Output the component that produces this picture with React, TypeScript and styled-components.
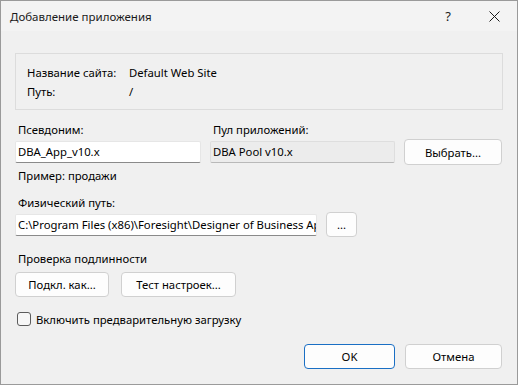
import React from "react"
import styled, { createGlobalStyle } from "styled-components"

const Global = createGlobalStyle`
  html, body { margin: 0; padding: 0; background: #f0f0f0; }
  body {
    font-family: "Segoe UI", "Noto Sans", "Open Sans", sans-serif;
    font-size: 11.3px;
    color: #000;
  }
  * { box-sizing: border-box; }
`

const Window = styled.div`
  width: 518px;
  height: 385px;
  border: 1px solid #9a9a9a;
  background: #f0f0f0;
  display: flex;
  flex-direction: column;
`

const TitleBar = styled.div`
  height: 30px;
  background: #f3f3f3;
  display: flex;
  align-items: center;
  padding-left: 9px;
`

const Title = styled.span`
  flex: 1;
  font-size: 11.5px;
  color: #1a1a1a;
`

const CaptionButton = styled.div`
  width: 46px;
  height: 30px;
  display: flex;
  align-items: center;
  justify-content: center;
  font-size: 13px;
  color: #1a1a1a;
`

const Body = styled.div`
  flex: 1;
  display: flex;
  flex-direction: column;
  padding: 22px 14px 15px 14px;
`

const GroupBox = styled.div`
  height: 57px;
  border: 1px solid #dcdcdc;
  padding: 9px 11px;
  display: grid;
  grid-template-columns: 102px 1fr;
  grid-auto-rows: 19px;
  align-items: center;
`

const Label = styled.div<{ $top?: number; $bottom?: number }>`
  line-height: 16px;
  height: 16px;
  padding-left: 3px;
  margin-top: ${(p) => p.$top ?? 0}px;
  margin-bottom: ${(p) => p.$bottom ?? 0}px;
  white-space: nowrap;
`

const FieldGrid = styled.div`
  margin-top: 12px;
  display: grid;
  grid-template-columns: 186px 185px 98px;
  column-gap: 9px;
  row-gap: 1px;
  align-items: center;
`

const Row = styled.div<{ $gap: number }>`
  display: flex;
  align-items: center;
  gap: ${(p) => p.$gap}px;
`

const Input = styled.div<{ $width?: number; $disabled?: boolean }>`
  width: ${(p) => (p.$width ? `${p.$width}px` : "auto")};
  height: 22px;
  background: ${(p) => (p.$disabled ? "#ececec" : "#fff")};
  border: 1px solid ${(p) => (p.$disabled ? "#dedede" : "#e6e6e6")};
  border-bottom-color: ${(p) => (p.$disabled ? "#b9b9b9" : "#8a8a8a")};
  border-radius: 2px;
  padding: 0 2px;
  line-height: 20px;
  white-space: nowrap;
  overflow: hidden;
`

const Button = styled.div<{ $width: number; $height?: number; $primary?: boolean }>`
  width: ${(p) => p.$width}px;
  height: ${(p) => p.$height ?? 25}px;
  background: #fdfdfd;
  border: 1px solid ${(p) => (p.$primary ? "#1a6fc4" : "#d0d0d0")};
  border-radius: 4px;
  display: flex;
  align-items: center;
  justify-content: center;
  white-space: nowrap;
`

const CheckRow = styled.div`
  margin-top: 14px;
  display: flex;
  align-items: center;
  gap: 5px;
  height: 16px;
`

const Checkbox = styled.div`
  width: 14px;
  height: 14px;
  margin-left: 2px;
  border: 1px solid #5c5c5c;
  border-radius: 3px;
  background: #f7f7f7;
`

const Footer = styled.div`
  margin-top: auto;
  display: flex;
  justify-content: flex-end;
  gap: 10px;
  padding-right: 1px;
`

export default function App() {
  return (
    <>
      <Global />
      <Window>
        <TitleBar>
          <Title>Добавление приложения</Title>
          <CaptionButton>?</CaptionButton>
          <CaptionButton>
            <svg width="11" height="11" viewBox="0 0 11 11">
              <path d="M0.5 0.5L10.5 10.5M10.5 0.5L0.5 10.5" stroke="#1a1a1a" strokeWidth="1" fill="none" />
            </svg>
          </CaptionButton>
        </TitleBar>
        <Body>
          <GroupBox>
            <span>Название сайта:</span>
            <span>Default Web Site</span>
            <span>Путь:</span>
            <span>/</span>
          </GroupBox>

          <FieldGrid>
            <Label>Псевдоним:</Label>
            <Label>Пул приложений:</Label>
            <span />
            <Input>DBA_App_v10.x</Input>
            <Input $disabled>DBA Pool v10.x</Input>
            <Button $width={98} $height={26}>Выбрать...</Button>
          </FieldGrid>

          <Label $top={3}>Пример: продажи</Label>
          <Label $top={11} $bottom={1}>Физический путь:</Label>
          <Row $gap={9}>
            <Input $width={302}>C:\Program Files (x86)\Foresight\Designer of Business Ap</Input>
            <Button $width={31} $height={25}>...</Button>
          </Row>

          <Label $top={14} $bottom={5}>Проверка подлинности</Label>
          <Row $gap={12}>
            <Button $width={94}>Подкл. как...</Button>
            <Button $width={115}>Тест настроек...</Button>
          </Row>

          <CheckRow>
            <Checkbox />
            <span>Включить предварительную загрузку</span>
          </CheckRow>

          <Footer>
            <Button $width={91} $primary>OK</Button>
            <Button $width={97}>Отмена</Button>
          </Footer>
        </Body>
      </Window>
    </>
  )
}
